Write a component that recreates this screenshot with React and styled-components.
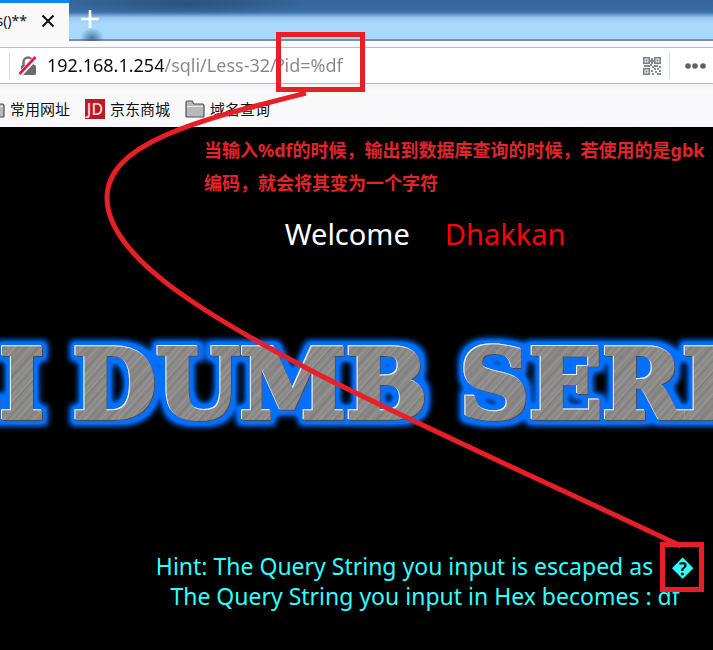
import React from "react";
import styled, { createGlobalStyle } from "styled-components";

const GlobalStyle = createGlobalStyle`
  * { box-sizing: border-box; }
  html, body, #root { height: 100%; }
  body {
    margin: 0;
    overflow: hidden;
    background: #000;
    font-family: "Noto Sans", "Noto Sans CJK SC", sans-serif;
  }
`;

const Window = styled.div`
  position: relative;
  display: flex;
  flex-direction: column;
  min-height: 100%;
  overflow: hidden;
`;

const TabStrip = styled.div`
  display: flex;
  height: 41px;
  background:
    radial-gradient(ellipse 12px 10px at 92px 38px, rgba(40, 75, 120, 0.7), transparent),
    radial-gradient(ellipse 120px 12px at 190px 4px, rgba(30, 60, 100, 0.5), transparent),
    linear-gradient(#346596 0, #3a6ea8 12px, #9dcbf2 18px, #a8d9fc 25px, #a8d9fc 39px, #6e93b2 39px);
`;

const Tab = styled.div`
  display: flex;
  align-items: center;
  justify-content: flex-end;
  width: 69px;
  padding: 0 14px 2px 0;
  gap: 14px;
  background: #f9f9fa;
  border-top: 3px solid #0a84ff;
  font-size: 14px;
  color: #111;
  flex: none;
`;

const TabTitle = styled.span`
  line-height: 20px;
`;

const IconButton = styled.button`
  display: flex;
  align-items: center;
  justify-content: center;
  padding: 0;
  border: 0;
  background: none;
  flex: none;
`;

const NewTab = styled(IconButton)`
  width: 42px;
  height: 38px;
`;

const Toolbar = styled.div`
  padding-top: 6px;
  background: #f9f9fb;
`;

const AddressBar = styled.div`
  display: flex;
  align-items: center;
  height: 37px;
  padding: 0 1px 0 9px;
  background: #fff;
  border: solid #bcbcbf;
  border-width: 1px 0;
`;

const Divider = styled.span`
  width: 1px;
  height: 26px;
  background: #dcdcde;
`;

const LockIcon = styled.svg`
  margin: 0 10px 0 8px;
  flex: none;
`;

const AddressInput = styled.input`
  flex: 1;
  min-width: 0;
  height: 32px;
  padding: 0 0 1px;
  border: 0;
  outline: 0;
  font: 18px "Noto Sans", sans-serif;
  color: transparent;
  background: linear-gradient(90deg, #0c0c0d 117px, #86868a 117px);
  background-clip: text;
`;

const AddressActions = styled.div`
  display: flex;
  align-items: center;
  gap: 8px;
`;

const Bookmarks = styled.nav`
  display: flex;
  align-items: center;
  gap: 15px;
  height: 43px;
  padding-top: 6px;
  background: linear-gradient(#f1f1f4, #f9f9fb 6px);
  overflow: hidden;
`;

const Bookmark = styled.a`
  display: flex;
  align-items: center;
  gap: 5px;
  flex: none;
  font-size: 15px;
  line-height: 20px;
  color: #111;
  text-decoration: none;

  &:first-child { margin-left: -15px; }
`;

const JdBadge = styled.span`
  width: 20px;
  height: 20px;
  background: #c01823;
  color: #f5dede;
  font: 500 16px/20px "Noto Sans", sans-serif;
  text-align: center;
`;

const Page = styled.main`
  flex: 1;
  display: flex;
  flex-direction: column;
  background: #000;
`;

const Note = styled.p`
  margin: 7px 0 0 204px;
  font-size: 18px;
  font-weight: 700;
  line-height: 33px;
  color: #e1252b;
  white-space: nowrap;
`;

const Welcome = styled.h1`
  display: flex;
  justify-content: center;
  gap: 35px;
  margin: 14px 0 0 137px;
  font-size: 29px;
  font-weight: 400;
  line-height: 40px;
  color: #fff;
`;

const Name = styled.span`
  color: #f00;
`;

const Banner = styled.svg`
  display: block;
  width: 100%;
  height: 120px;
  margin-top: 70px;
`;

const BannerText = styled.text`
  font-family: "DejaVu Serif", serif;
  font-size: 96px;
  font-weight: 700;
  stroke-width: 4px;
`;

const Hints = styled.div`
  margin: 107px 0 0 137px;
  font-size: 23px;
  line-height: 30px;
  text-align: center;
  color: #3ff;
  white-space: nowrap;
`;

const HintLine = styled.p`
  display: flex;
  align-items: center;
  justify-content: center;
  gap: 18px;
  margin: 0;
`;

const Annotations = styled.svg`
  position: absolute;
  top: 0;
  left: 0;
  pointer-events: none;
`;

const Folder = () => (
  <svg width="20" height="18" viewBox="0 0 20 18" aria-hidden="true">
    <path d="M1 16V2.5Q1 1 2.500 1H7L9 4H17.500Q19 4 19 5.500V16Q19 17 18 17H2Q1 17 1 16Z" fill="#b9b9bb" stroke="#4f4f52" strokeWidth="1.200" />
    <path d="M2 6.500H18" stroke="#e8e8ea" />
  </svg>
);

const finder = [[0, 0], [11, 0], [0, 11]];
const dots = [[8, 1], [8, 5], [1, 8], [5, 8], [9, 9], [13, 8], [16, 9], [8, 13], [11, 11], [14, 11], [12, 14], [16, 13], [9, 16], [14, 16], [16, 16], [7, 3], [9, 3], [3, 8], [7, 7], [11, 8]];

const QrCode = () => (
  <svg width="18" height="18" viewBox="0 0 18 18" aria-hidden="true">
    {finder.map(([x, y]) => (
      <g key={`${x}-${y}`} fill="none" stroke="#7b828c">
        <rect x={x + 0.8} y={y + 0.8} width="5.400" height="5.400" strokeWidth="1.600" />
        <rect x={x + 3} y={y + 3} width="1" height="1" />
      </g>
    ))}
    {dots.map(([x, y]) => <rect key={`${x}-${y}`} x={x} y={y} width="2" height="2" fill="#858c96" />)}
  </svg>
);

const scratches = [[1, 1, "#b4b2af"], [4, 1, "#73716f"], [6, 2, "#979592"], [10, 1, "#b0aeaa"], [12, 1, "#6c6a68"], [16, 1, "#a5a3a0"], [19, 1, "#6d6b6a"], [21, 2, "#989693"], [26, 1, "#b6b4b0"], [29, 1, "#74726f"], [33, 3, "#7e7c7a"], [38, 1, "#aaa8a5"], [43, 2, "#747270"], [47, 1, "#b0aeaa"]];

export default function App() {
  return (
    <Window>
      <GlobalStyle />
      <TabStrip>
        <Tab>
          <TabTitle>s()**</TabTitle>
          <IconButton aria-label="Close tab">
            <svg width="14" height="14" viewBox="0 0 14 14">
              <path d="M1.500 1.500l11 11M12.500 1.500l-11 11" stroke="#111" strokeWidth="2" />
            </svg>
          </IconButton>
        </Tab>
        <NewTab aria-label="New tab">
          <svg width="18" height="18" viewBox="0 0 18 18">
            <path d="M9 0v18M0 9h18" stroke="#fff" strokeWidth="2.600" />
          </svg>
        </NewTab>
      </TabStrip>

      <Toolbar>
        <AddressBar>
          <Divider />
          <LockIcon width="19" height="20" viewBox="0 0 19 20" aria-hidden="true">
            <path d="M5.500 10V6a4.500 4.500 0 0 1 9 0v4" fill="none" stroke="#737376" strokeWidth="2.500" />
            <rect x="3" y="9" width="15" height="10" rx="1.500" fill="#6b6b6e" />
            <path d="M2 18.500L18 1.500" stroke="#fff" strokeWidth="5" />
            <path d="M1.500 18L17.500 1" stroke="#e8174b" strokeWidth="2.600" />
          </LockIcon>
          <AddressInput aria-label="Address" defaultValue="192.168.1.254/sqli/Less-32/?id=%df" spellCheck={false} />
          <AddressActions>
            <IconButton aria-label="QR code"><QrCode /></IconButton>
            <Divider />
            <IconButton aria-label="Page actions">
              <svg width="34" height="8" viewBox="0 0 34 8">
                {[10, 17, 25].map((x) => <circle key={x} cx={x} cy="4" r="2.800" fill="#606063" />)}
              </svg>
            </IconButton>
          </AddressActions>
        </AddressBar>
        <Bookmarks aria-label="Bookmarks">
          <Bookmark href="#common"><Folder />常用网址</Bookmark>
          <Bookmark href="#jd"><JdBadge>JD</JdBadge>京东商城</Bookmark>
          <Bookmark href="#domain"><Folder />域名查询</Bookmark>
        </Bookmarks>
      </Toolbar>

      <Page>
        <Note>
          当输入%df的时候，输出到数据库查询的时候，若使用的是gbk<br />
          编码，就会将其变为一个字符
        </Note>
        <Welcome>Welcome <Name>Dhakkan</Name></Welcome>
        <Banner>
          <defs>
            <pattern id="steel" width="50" height="50" patternUnits="userSpaceOnUse" patternTransform="rotate(-48)">
              <rect width="50" height="50" fill="#8b8987" />
              {scratches.map(([y, h, c]) => <rect key={y} y={y} width="50" height={h} fill={c} opacity="0.45" />)}
            </pattern>
            <filter id="bevel" filterUnits="userSpaceOnUse" x="-120" y="0" width="1000" height="120">
              <feMorphology in="SourceAlpha" operator="dilate" radius="5" result="wide" />
              <feGaussianBlur in="wide" stdDeviation="3" result="halo" />
              <feComponentTransfer in="halo" result="strong"><feFuncA type="linear" slope="1.500" /></feComponentTransfer>
              <feFlood floodColor="#0070ff" />
              <feComposite in2="strong" operator="in" result="glow" />
              <feOffset in="SourceAlpha" dx="-1" dy="-1" result="up" />
              <feFlood floodColor="#e2f2ff" />
              <feComposite in2="up" operator="in" result="light" />
              <feOffset in="SourceAlpha" dx="1" dy="1" result="down" />
              <feFlood floodColor="#454b55" />
              <feComposite in2="down" operator="in" result="dark" />
              <feMerge>
                <feMergeNode in="glow" />
                <feMergeNode in="dark" />
                <feMergeNode in="light" />
                <feMergeNode in="SourceGraphic" />
              </feMerge>
            </filter>
          </defs>
          <BannerText y="94" fill="url(#steel)" stroke="url(#steel)" filter="url(#bevel)">
            <tspan x="-68">LI</tspan>
            <tspan x="73">DUMB</tspan>
            <tspan x="460">SERI</tspan>
          </BannerText>
        </Banner>
        <Hints>
          <HintLine>Hint: The Query String you input is escaped as <span>�</span></HintLine>
          <HintLine>The Query String you input in Hex becomes : df</HintLine>
        </Hints>
      </Page>

      <Annotations width="713" height="650" fill="none" stroke="#e81f27" strokeWidth="5" aria-hidden="true">
        <rect x="278.500" y="34.500" width="84" height="55" />
        <path d="M306 93C200 120 107 142 107 198C107 255 200 312 310 370C390 412 550 484 681 546" />
        <rect x="662.500" y="544.500" width="39" height="45" />
      </Annotations>
    </Window>
  );
}
